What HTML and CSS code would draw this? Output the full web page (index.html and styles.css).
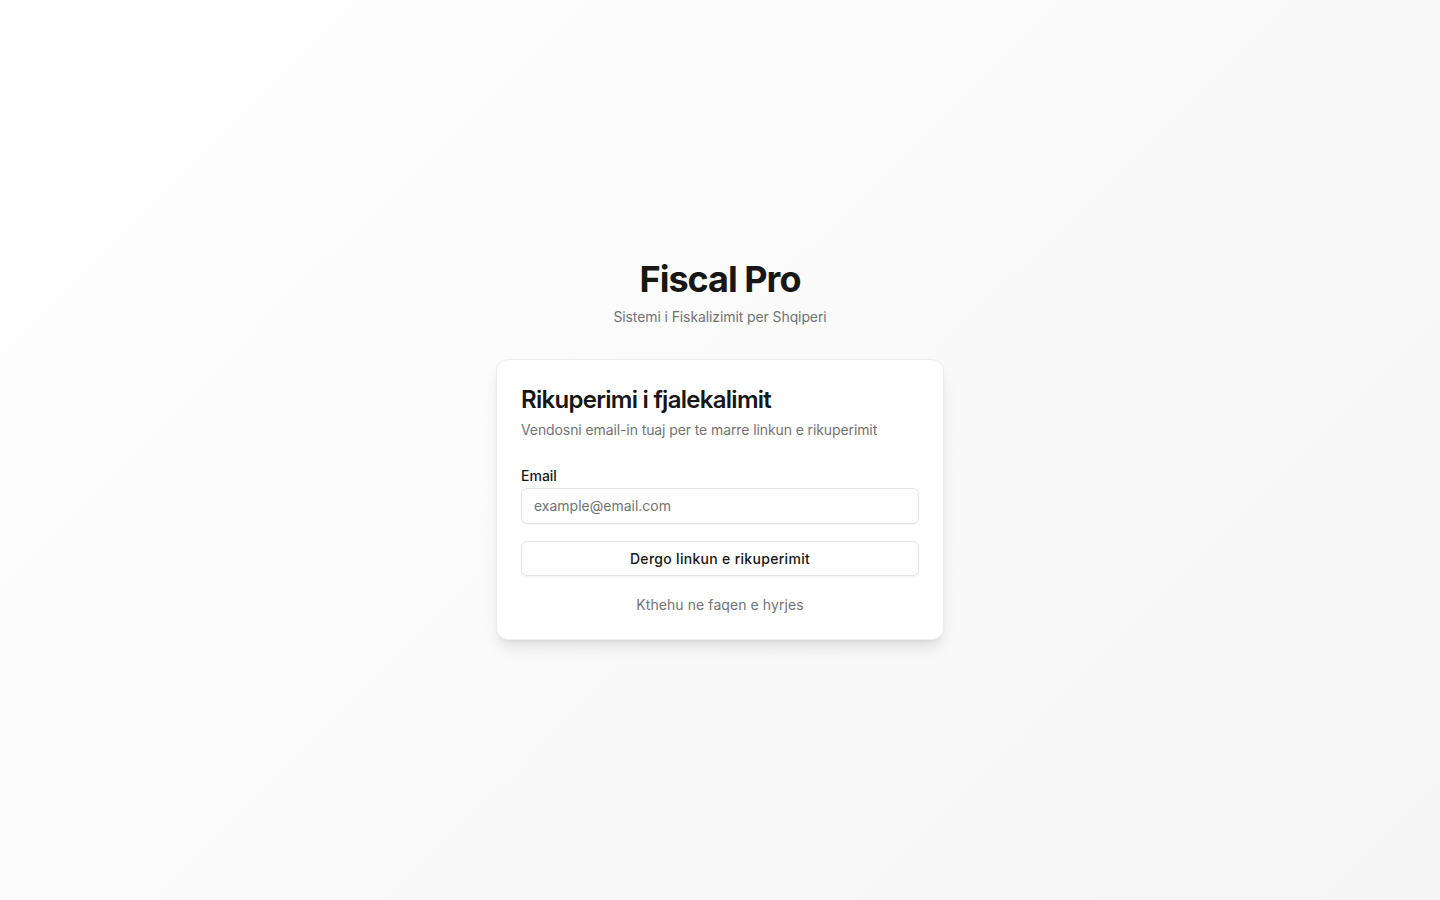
FILE: index.html
```html
<!DOCTYPE html>
<html lang="sq">

<head>
  <meta charset="UTF-8">
  <meta name="viewport" content="width=device-width, initial-scale=1.0">
  <title>Fiscal Pro - Rikuperimi i fjalekalimit</title>
  <link rel="stylesheet" href="styles.css">
</head>

<body>
  <main class="page">
    <div class="wrap">
      <header class="brand">
        <h1>Fiscal Pro</h1>
        <p>Sistemi i Fiskalizimit per Shqiperi</p>
      </header>

      <section class="card">
        <div class="card-header">
          <h2>Rikuperimi i fjalekalimit</h2>
          <p>Vendosni email-in tuaj per te marre linkun e rikuperimit</p>
        </div>
        <form class="card-content" onsubmit="return false">
          <div class="field">
            <label for="email">Email</label>
            <input type="email" id="email" name="email" placeholder="example@email.com">
          </div>
          <button type="submit" class="btn">Dergo linkun e rikuperimit</button>
          <div class="back">
            <a href="#">Kthehu ne faqen e hyrjes</a>
          </div>
        </form>
      </section>
    </div>
  </main>
</body>

</html>
```

FILE: styles.css
```css
* {
  box-sizing: border-box;
}

body {
  margin: 0;
  font-family: Inter, "Noto Sans", sans-serif;
  color: #0a0a0a;
  background: linear-gradient(135deg, #ffffff 0%, #f5f5f5 100%);
}

.page {
  min-height: 100vh;
  display: flex;
  align-items: center;
  justify-content: center;
}

.wrap {
  width: 448px;
  margin-top: -2px;
}

.brand {
  text-align: center;
  margin-bottom: 32px;
}

.brand h1 {
  margin: 0;
  font-size: 36px;
  line-height: 40px;
  font-weight: 700;
  letter-spacing: -1px;
  color: #171717;
}

.brand p {
  margin: 8px 0 0;
  font-size: 14px;
  line-height: 20px;
  color: #737373;
  letter-spacing: -0.1px;
}

.card {
  background: #fff;
  border: 1px solid #ececec;
  border-radius: 12px;
  box-shadow: 0 10px 15px -3px rgba(0, 0, 0, 0.1), 0 4px 6px -4px rgba(0, 0, 0, 0.1);
}

.card-header {
  padding: 24px 24px 26px;
}

.card-header h2 {
  margin: 0;
  font-size: 24px;
  line-height: 32px;
  font-weight: 600;
  letter-spacing: -0.72px;
  color: #171717;
}

.card-header p {
  margin: 4px 0 0;
  font-size: 14px;
  line-height: 20px;
  color: #737373;
  letter-spacing: -0.1px;
}

.card-content {
  padding: 0 24px 24px;
  display: flex;
  flex-direction: column;
}

.field {
  display: flex;
  flex-direction: column;
  gap: 2px;
}

.field label {
  font-size: 14px;
  line-height: 20px;
  font-weight: 500;
  color: #171717;
}

.field input {
  height: 36px;
  padding: 0 12px;
  border: 1px solid #e5e5e5;
  border-radius: 6px;
  font: 14px Inter, sans-serif;
  color: #171717;
  box-shadow: 0 1px 2px rgba(0, 0, 0, 0.05);
  outline: none;
}

.field input::placeholder {
  color: #737373;
}

.btn {
  margin-top: 17px;
  height: 35px;
  border: 1px solid #e5e5e5;
  border-radius: 6px;
  background: #fff;
  font: 500 14px Inter, sans-serif;
  letter-spacing: 0.3px;
  color: #171717;
  box-shadow: 0 1px 2px rgba(0, 0, 0, 0.05);
  cursor: pointer;
}

.back {
  margin-top: 19px;
  text-align: center;
  font-size: 14px;
  line-height: 20px;
  letter-spacing: 0.08px;
}

.back a {
  color: #737373;
  text-decoration: none;
}
```
